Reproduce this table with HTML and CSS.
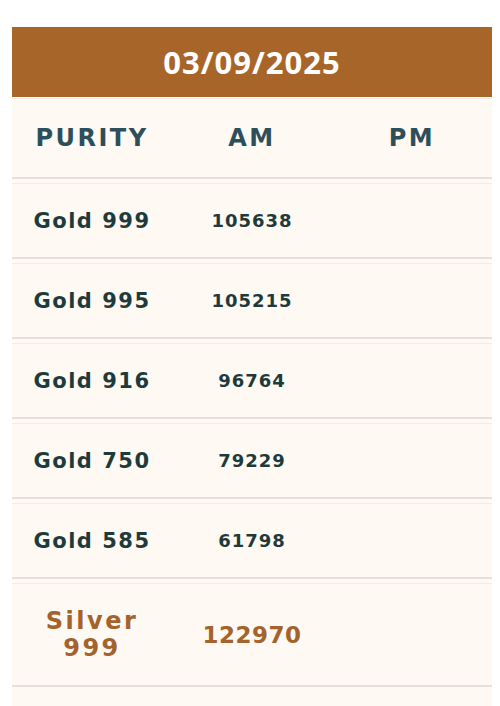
FILE: index.html
```html
<!DOCTYPE html>
<html lang="en">
<head>
<meta charset="utf-8">
<title>Gold Rates</title>
<link rel="stylesheet" href="styles.css">
</head>
<body>
<div class="card">
  <div class="date">03/09/2025</div>
  <div class="table">
    <div class="row head">
      <div>PURITY</div><div>AM</div><div>PM</div>
    </div>
    <div class="row">
      <div class="name">Gold 999</div><div class="val">105638</div><div class="val"></div>
    </div>
    <div class="row">
      <div class="name">Gold 995</div><div class="val">105215</div><div class="val"></div>
    </div>
    <div class="row">
      <div class="name">Gold 916</div><div class="val">96764</div><div class="val"></div>
    </div>
    <div class="row">
      <div class="name">Gold 750</div><div class="val">79229</div><div class="val"></div>
    </div>
    <div class="row">
      <div class="name">Gold 585</div><div class="val">61798</div><div class="val"></div>
    </div>
    <div class="row silver">
      <div class="name">Silver<br>999</div><div class="val">122970</div><div class="val"></div>
    </div>
  </div>
</div>
</body>
</html>
```

FILE: styles.css
```css
html, body {
  margin: 0;
  background: #ffffff;
}
body {
  padding: 27px 8px 0 12px;
  font-family: "DejaVu Sans", sans-serif;
}
.card {
  width: 480px;
}
.date {
  height: 70px;
  background: #a8652a;
  color: #ffffff;
  font-family: "Open Sans", sans-serif;
  font-weight: 700;
  font-size: 31px;
  letter-spacing: 1px;
  display: flex;
  align-items: center;
  justify-content: center;
  margin-bottom: 1px;
}
.table {
  background: #fef9f2;
  padding-bottom: 20px;
}
.row {
  display: grid;
  grid-template-columns: repeat(3, 1fr);
  align-items: center;
  text-align: center;
  height: 73px;
  border-top: 1px solid #f3ebe7;
  border-bottom: 2px solid #e8dedb;
  margin-bottom: 4px;
}
.row.head {
  height: 78px;
  color: #2d4f5c;
  font-weight: bold;
  font-size: 24px;
  letter-spacing: 2.5px;
}
.name {
  color: #1e3b3b;
  font-weight: bold;
  font-size: 21px;
  letter-spacing: 1.5px;
}
.val {
  color: #1e3b3b;
  font-weight: bold;
  font-size: 18px;
  letter-spacing: 1px;
}
.row.silver {
  height: 101px;
}
.silver .name {
  color: #a4622c;
  font-size: 24px;
  line-height: 27px;
  letter-spacing: 2.5px;
}
.silver .val {
  color: #a4622c;
  font-size: 23px;
  letter-spacing: 0.5px;
}
```
